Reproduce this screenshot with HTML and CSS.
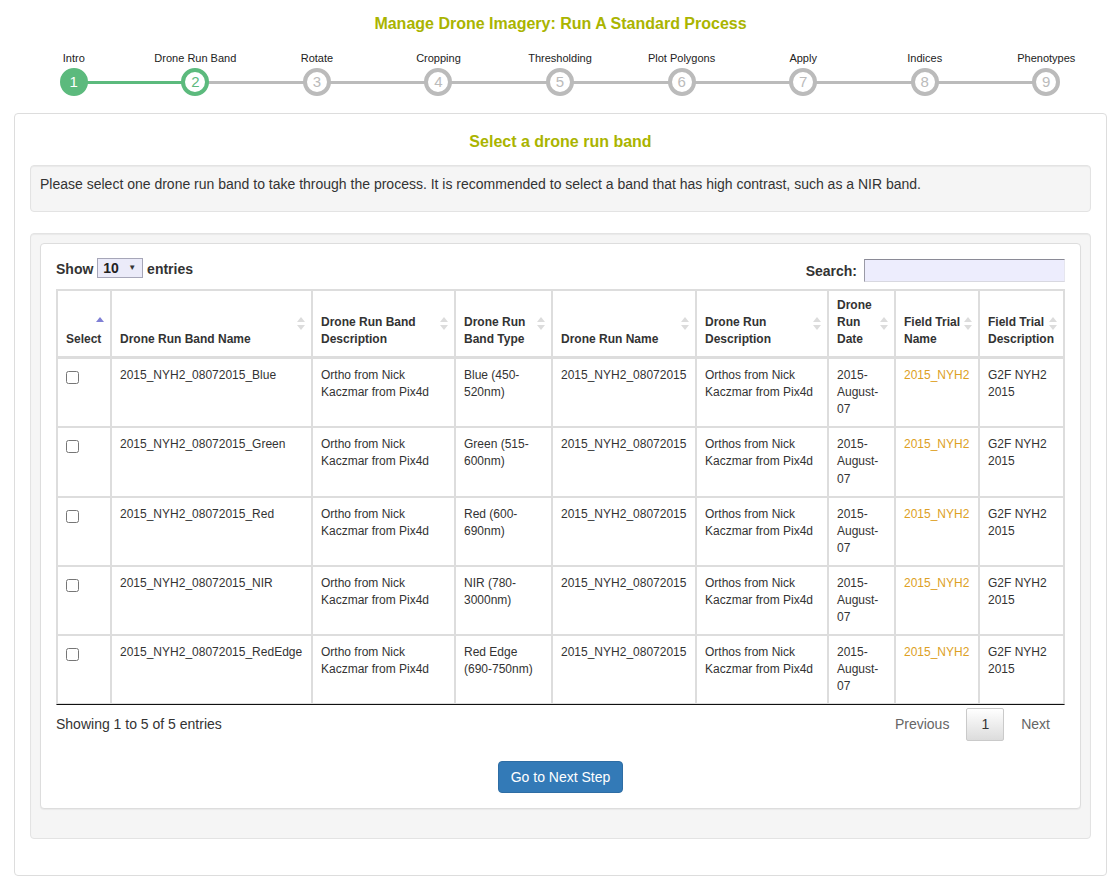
FILE: index.html
```html
<!DOCTYPE html>
<html>
<head>
<meta charset="utf-8">
<title>Manage Drone Imagery</title>
<link rel="stylesheet" href="styles.css">
</head>
<body>
<div class="page">
  <h3 class="title">Manage Drone Imagery: Run A Standard Process</h3>
  <ol class="steps">
    <li class="step done"><span class="label">Intro</span><span class="dot">1</span></li>
    <li class="step current"><span class="label">Drone Run Band</span><span class="dot">2</span></li>
    <li class="step"><span class="label">Rotate</span><span class="dot">3</span></li>
    <li class="step"><span class="label">Cropping</span><span class="dot">4</span></li>
    <li class="step"><span class="label">Thresholding</span><span class="dot">5</span></li>
    <li class="step"><span class="label">Plot Polygons</span><span class="dot">6</span></li>
    <li class="step"><span class="label">Apply</span><span class="dot">7</span></li>
    <li class="step"><span class="label">Indices</span><span class="dot">8</span></li>
    <li class="step"><span class="label">Phenotypes</span><span class="dot">9</span></li>
  </ol>

  <div class="panel">
    <h4 class="sub">Select a drone run band</h4>
    <div class="well note">Please select one drone run band to take through the process. It is recommended to select a band that has high contrast, such as a NIR band.</div>
    <div class="well outer">
      <div class="box">
        <div class="controls">
          <div class="len">Show <span class="sel">10<span class="caret">&#9660;</span></span> entries</div>
          <div class="search">Search: <input class="search-input" type="text"></div>
        </div>
        <table class="grid">
          <thead>
            <tr>
              <th class="w1">Select<span class="sort"><svg width="8" height="13" viewBox="0 0 8 13"><path d="M0 5 L4 0 L8 5 Z" fill="#7f7fd5"/></svg></span></th>
              <th class="w2">Drone Run Band Name<span class="sort"><svg width="8" height="13" viewBox="0 0 8 13"><path d="M0 5 L4 0 L8 5 Z M0 8 L8 8 L4 13 Z" fill="#dcdcdc"/></svg></span></th>
              <th class="w3">Drone Run Band Description<span class="sort"><svg width="8" height="13" viewBox="0 0 8 13"><path d="M0 5 L4 0 L8 5 Z M0 8 L8 8 L4 13 Z" fill="#dcdcdc"/></svg></span></th>
              <th class="w4">Drone Run Band Type<span class="sort"><svg width="8" height="13" viewBox="0 0 8 13"><path d="M0 5 L4 0 L8 5 Z M0 8 L8 8 L4 13 Z" fill="#dcdcdc"/></svg></span></th>
              <th class="w5">Drone Run Name<span class="sort"><svg width="8" height="13" viewBox="0 0 8 13"><path d="M0 5 L4 0 L8 5 Z M0 8 L8 8 L4 13 Z" fill="#dcdcdc"/></svg></span></th>
              <th class="w6">Drone Run Description<span class="sort"><svg width="8" height="13" viewBox="0 0 8 13"><path d="M0 5 L4 0 L8 5 Z M0 8 L8 8 L4 13 Z" fill="#dcdcdc"/></svg></span></th>
              <th class="w7">Drone Run Date<span class="sort"><svg width="8" height="13" viewBox="0 0 8 13"><path d="M0 5 L4 0 L8 5 Z M0 8 L8 8 L4 13 Z" fill="#dcdcdc"/></svg></span></th>
              <th class="w8">Field Trial Name<span class="sort"><svg width="8" height="13" viewBox="0 0 8 13"><path d="M0 5 L4 0 L8 5 Z M0 8 L8 8 L4 13 Z" fill="#dcdcdc"/></svg></span></th>
              <th class="w9">Field Trial Description<span class="sort"><svg width="8" height="13" viewBox="0 0 8 13"><path d="M0 5 L4 0 L8 5 Z M0 8 L8 8 L4 13 Z" fill="#dcdcdc"/></svg></span></th>
            </tr>
          </thead>
          <tbody>
            <tr>
              <td><input class="chk" type="checkbox"></td>
              <td class="nowrap">2015_NYH2_08072015_Blue</td>
              <td>Ortho from Nick Kaczmar from Pix4d</td>
              <td>Blue (450-520nm)</td>
              <td>2015_NYH2_08072015</td>
              <td>Orthos from Nick Kaczmar from Pix4d</td>
              <td>2015-August-07</td>
              <td class="nowrap"><a class="link" href="#">2015_NYH2</a></td>
              <td>G2F NYH2 2015</td>
            </tr>
            <tr>
              <td><input class="chk" type="checkbox"></td>
              <td class="nowrap">2015_NYH2_08072015_Green</td>
              <td>Ortho from Nick Kaczmar from Pix4d</td>
              <td>Green (515-600nm)</td>
              <td>2015_NYH2_08072015</td>
              <td>Orthos from Nick Kaczmar from Pix4d</td>
              <td>2015-August-07</td>
              <td class="nowrap"><a class="link" href="#">2015_NYH2</a></td>
              <td>G2F NYH2 2015</td>
            </tr>
            <tr>
              <td><input class="chk" type="checkbox"></td>
              <td class="nowrap">2015_NYH2_08072015_Red</td>
              <td>Ortho from Nick Kaczmar from Pix4d</td>
              <td>Red (600-690nm)</td>
              <td>2015_NYH2_08072015</td>
              <td>Orthos from Nick Kaczmar from Pix4d</td>
              <td>2015-August-07</td>
              <td class="nowrap"><a class="link" href="#">2015_NYH2</a></td>
              <td>G2F NYH2 2015</td>
            </tr>
            <tr>
              <td><input class="chk" type="checkbox"></td>
              <td class="nowrap">2015_NYH2_08072015_NIR</td>
              <td>Ortho from Nick Kaczmar from Pix4d</td>
              <td>NIR (780-3000nm)</td>
              <td>2015_NYH2_08072015</td>
              <td>Orthos from Nick Kaczmar from Pix4d</td>
              <td>2015-August-07</td>
              <td class="nowrap"><a class="link" href="#">2015_NYH2</a></td>
              <td>G2F NYH2 2015</td>
            </tr>
            <tr>
              <td><input class="chk" type="checkbox"></td>
              <td class="nowrap">2015_NYH2_08072015_RedEdge</td>
              <td>Ortho from Nick Kaczmar from Pix4d</td>
              <td>Red Edge (690-750nm)</td>
              <td>2015_NYH2_08072015</td>
              <td>Orthos from Nick Kaczmar from Pix4d</td>
              <td>2015-August-07</td>
              <td class="nowrap"><a class="link" href="#">2015_NYH2</a></td>
              <td>G2F NYH2 2015</td>
            </tr>
          </tbody>
        </table>
        <div class="foot">
          <div class="info">Showing 1 to 5 of 5 entries</div>
          <div class="pager">
            <span class="pbtn disabled">Previous</span>
            <span class="pbtn active">1</span>
            <span class="pbtn disabled">Next</span>
          </div>
        </div>
        <div class="actions">
          <button class="btn" type="button">Go to Next Step</button>
        </div>
      </div>
    </div>
  </div>
</div>
</body>
</html>
```

FILE: styles.css
```css
html, body {
  margin: 0;
  padding: 0;
  background: #fff;
}

body {
  font-family: "Liberation Sans", Arial, Helvetica, sans-serif;
  font-size: 14px;
  line-height: 20px;
  color: #333;
}

.page {
  padding: 0 9px 0 14px;
}

.title {
  margin: 13px 0 0;
  font-size: 16px;
  line-height: 22px;
  font-weight: bold;
  text-align: center;
  color: #aab400;
}

/* ---------- step indicator ---------- */
.steps {
  list-style: none;
  margin: 16px 0 17px -1px;
  padding: 0;
  display: flex;
}

.step {
  flex: 1 1 0;
  display: flex;
  flex-direction: column;
  align-items: center;
  position: relative;
}

.step::after {
  content: "";
  position: absolute;
  left: 50%;
  width: 100%;
  top: 30px;
  height: 3px;
  background: #bbb;
}

.step:last-child::after {
  display: none;
}

.step.done::after {
  background: #5cba7d;
}

.label {
  font-size: 11px;
  line-height: 14px;
  color: #222;
  white-space: nowrap;
}

.dot {
  position: relative;
  z-index: 1;
  margin-top: 3px;
  width: 28px;
  height: 28px;
  box-sizing: border-box;
  border-radius: 50%;
  border: 4px solid #bbb;
  background: #fff;
  color: #bbb;
  font-size: 15px;
  line-height: 20px;
  text-align: center;
}

.step.done .dot {
  background: #5cba7d;
  border-color: #5cba7d;
  color: #fff;
}

.step.current .dot {
  border-color: #5cba7d;
  color: #5cba7d;
}

/* ---------- panels ---------- */
.panel {
  border: 1px solid #ddd;
  border-radius: 4px;
  padding: 16px 15px 36px;
  background: #fff;
}

.sub {
  margin: 0 0 11px;
  font-size: 16px;
  line-height: 24px;
  font-weight: bold;
  text-align: center;
  color: #aab400;
}

.well {
  background: #f5f5f5;
  border: 1px solid #e3e3e3;
  border-radius: 4px;
  box-shadow: inset 0 1px 1px rgba(0, 0, 0, 0.05);
}

.note {
  padding: 8px 9px 17px;
}

.outer {
  margin-top: 21px;
  padding: 9px 9px 29px;
}

.box {
  background: #fff;
  border: 1px solid #ddd;
  border-radius: 4px;
  box-shadow: 0 1px 1px rgba(0, 0, 0, 0.05);
  padding: 15px;
}

/* ---------- datatable controls ---------- */
.controls {
  display: flex;
  justify-content: space-between;
  align-items: flex-start;
  height: 23px;
  margin-bottom: 7px;
}

.len {
  font-weight: bold;
  line-height: 20px;
}

.sel {
  display: inline-block;
  box-sizing: border-box;
  width: 46px;
  height: 20px;
  margin-top: -1px;
  vertical-align: top;
  border: 1px solid #a6a6b8;
  background: #ebebf9;
  padding-left: 5px;
  line-height: 18px;
  font-weight: bold;
  color: #222;
}

.caret {
  float: right;
  margin-right: 6px;
  font-size: 8px;
  color: #333;
}

.search {
  font-weight: bold;
  display: flex;
  align-items: center;
  height: 23px;
}

.search-input {
  box-sizing: border-box;
  width: 201px;
  height: 23px;
  margin: 0 0 0 7px;
  padding: 0 4px;
  background: #ededfd;
  border-top: 1px solid #8a8a96;
  border-left: 1px solid #9a9aa6;
  border-right: 1px solid #e6e6ee;
  border-bottom: 1px solid #d8d8e0;
  outline: none;
}

/* ---------- table ---------- */
.grid {
  width: 1009px;
  table-layout: fixed;
  border-collapse: separate;
  border-spacing: 0;
  border: 1px solid #ddd;
  border-bottom: 1px solid #111;
  font-size: 12px;
  line-height: 17.06px;
  color: #333;
}

.grid th,
.grid td {
  box-sizing: border-box;
  border: 1px solid #ddd;
  text-align: left;
}

.grid th {
  position: relative;
  vertical-align: bottom;
  font-weight: bold;
  padding: 6px 14px 8px 8px;
  border-bottom-width: 2px;
}

.grid td {
  vertical-align: top;
  padding: 8px;
}

.w1 { width: 54px; }
.w2 { width: 201px; }
.w3 { width: 143px; }
.w4 { width: 97px; }
.w5 { width: 144px; }
.w6 { width: 132px; }
.w7 { width: 67px; }
.w8 { width: 84px; }
.w9 { width: 85px; }

.sort {
  position: absolute;
  right: 6px;
  top: 50%;
  margin-top: -7px;
  width: 8px;
  height: 13px;
  line-height: 0;
}

.nowrap {
  white-space: nowrap;
}

.chk {
  margin: 4px 0 0 0;
  width: 13px;
  height: 13px;
}

.link {
  color: #dd9f24;
  text-decoration: none;
}

/* ---------- footer ---------- */
.foot {
  display: flex;
  justify-content: space-between;
  align-items: flex-start;
}

.info {
  padding-top: 9px;
  line-height: 20px;
}

.pager {
  display: flex;
  margin-top: 3px;
}

.pbtn {
  display: inline-block;
  padding: 6px 14px;
  line-height: 19px;
  margin-left: 2px;
  border: 1px solid transparent;
  border-radius: 2px;
  color: #666;
}

.pbtn.active {
  color: #333;
  border-color: #cacaca;
  background: linear-gradient(to bottom, #ffffff 0%, #dcdcdc 100%);
}

.actions {
  margin-top: 20px;
  text-align: center;
}

.btn {
  font-family: inherit;
  font-size: 14px;
  line-height: 20px;
  padding: 5px 12px;
  color: #fff;
  background: #337ab7;
  border: 1px solid #2e6da4;
  border-radius: 4px;
}
```
